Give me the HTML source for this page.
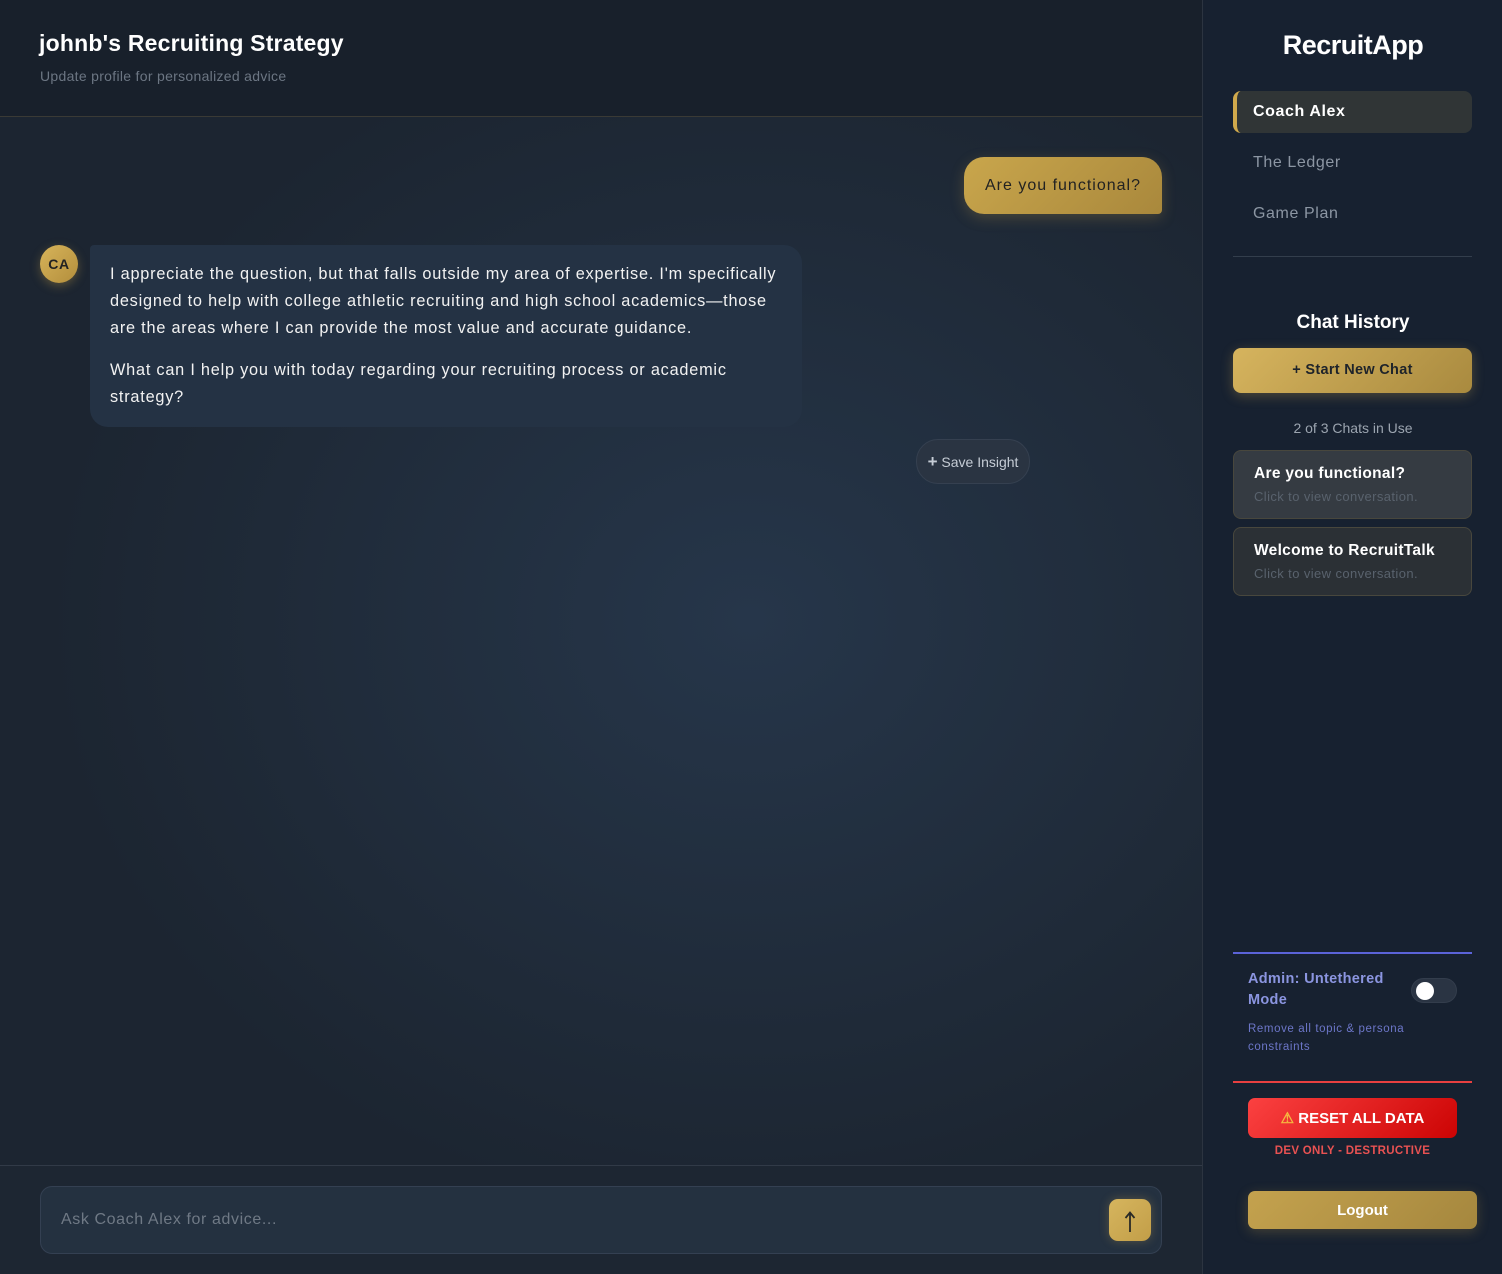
<!DOCTYPE html>
<html><head><meta charset="utf-8"><style>
*{box-sizing:border-box;margin:0;padding:0}
body{width:1502px;height:1274px;overflow:hidden;font-family:"Liberation Sans",sans-serif;background:#1b2430;position:relative;letter-spacing:0.6px}
.main{position:absolute;left:0;top:0;width:1202px;height:1274px;background:radial-gradient(ellipse 700px 600px at 750px 620px,#26364a 0%,#1f2a38 70%,#1c2531 100%)}
.hdr{position:absolute;left:0;top:0;width:1202px;height:117px;background:#18202b;border-bottom:1px solid #3a3a35}
.hdr h1{position:absolute;left:39px;top:30px;font-size:23px;font-weight:bold;color:#fff;letter-spacing:0.2px}
.hdr p{position:absolute;left:40px;top:68px;font-size:14px;color:#6c7683;letter-spacing:0.3px}
.ubub{position:absolute;left:964px;top:157px;width:198px;height:57px;border-radius:20px 20px 4px 20px;background:linear-gradient(135deg,#c9a64c,#a9883c);color:#222;font-size:16px;line-height:57px;text-align:center;box-shadow:0 4px 14px rgba(200,160,70,.25);letter-spacing:1px}
.av{position:absolute;left:40px;top:245px;width:38px;height:38px;border-radius:50%;background:linear-gradient(135deg,#d7b45a,#b38e3c);color:#222;font-weight:bold;font-size:14px;line-height:38px;text-align:center;box-shadow:0 3px 10px rgba(200,160,70,.35)}
.abub{position:absolute;left:90px;top:245px;width:712px;height:182px;border-radius:4px 18px 18px 18px;background:#243244;color:#f2f2f2;font-size:16.3px;line-height:27px;padding:16px 20px;letter-spacing:0.78px;white-space:nowrap}
.abub p+p{margin-top:15px}
.save{position:absolute;left:916px;top:439px;width:114px;height:45px;border-radius:22px;background:#2a3442;border:1px solid #354050;color:#c5ccd5;font-size:14px;line-height:43px;text-align:center;letter-spacing:0}
.foot{position:absolute;left:0;top:1165px;width:1202px;height:109px;border-top:1px solid #313a47;background:#1d2632}
.inp{position:absolute;left:40px;top:1186px;width:1122px;height:68px;border-radius:12px;background:#243140;border:1px solid #344052;color:#6f7985;font-size:16px;line-height:66px;padding-left:20px}
.send{position:absolute;left:1109px;top:1199px;width:42px;height:42px;border-radius:9px;background:linear-gradient(135deg,#d6b55e,#c29e48);box-shadow:0 0 10px rgba(210,170,80,.3)}
.side{position:absolute;left:1202px;top:0;width:300px;height:1274px;background:#172130;border-left:1px solid #2c3440}
.logo{position:absolute;left:0;width:300px;top:30px;text-align:center;color:#fff;font-weight:bold;font-size:27px;letter-spacing:-0.5px}
.nav{position:absolute;left:30px;width:239px;height:42px;font-size:16px;line-height:42px;padding-left:20px;color:#8c96a3}
.nav.on{background:#303536;color:#fff;font-weight:bold;border-radius:8px;border-left:4px solid #d0a94c;padding-left:16px}
.hr{position:absolute;left:30px;width:239px;height:1px;background:#333e4c}
.ch{position:absolute;top:312px;width:300px;text-align:center;color:#fff;font-weight:bold;font-size:19px;letter-spacing:0}
.new{position:absolute;left:30px;top:348px;width:239px;height:45px;border-radius:8px;background:linear-gradient(135deg,#d6b45e,#a98a3f);color:#1e232a;font-weight:bold;font-size:14.5px;line-height:45px;text-align:center;box-shadow:0 3px 12px rgba(210,170,80,.3);letter-spacing:0.3px}
.cnt{position:absolute;top:420px;width:300px;text-align:center;color:#9ca5b0;font-size:14px;letter-spacing:0}
.card{position:absolute;left:30px;width:239px;height:69px;border-radius:8px;background:#31373d;border:1px solid #48473d;padding:14px 20px}
.card b{display:block;color:#fff;font-size:15.5px;letter-spacing:0.3px}
.card span{display:block;color:#59626d;font-size:13px;margin-top:6px;letter-spacing:0.4px}
.adm{position:absolute;left:45px;top:969px;color:#8b95e0;font-weight:bold;font-size:14.5px;line-height:21px;width:160px;letter-spacing:0.3px}
.adms{position:absolute;left:45px;top:1020px;color:#6c76c8;font-size:11.5px;line-height:18px;width:170px}
.tog{position:absolute;left:208px;top:978px;width:46px;height:25px;border-radius:13px;background:#2a3443;border:1px solid #333d4c}
.tog i{position:absolute;left:4px;top:3px;width:18px;height:18px;border-radius:50%;background:#fff}
.reset{position:absolute;left:45px;top:1098px;width:209px;height:40px;border-radius:7px;background:linear-gradient(135deg,#fb4141,#cc0404);color:#fff;font-weight:bold;font-size:15px;line-height:42px;text-align:center;letter-spacing:0}
.dev{position:absolute;left:45px;width:209px;top:1145px;text-align:center;color:#e95252;font-weight:bold;font-size:11.5px;letter-spacing:0.3px}
.out{position:absolute;left:45px;top:1191px;width:229px;height:38px;border-radius:7px;background:linear-gradient(135deg,#c4a24e,#a5873e);color:#fff;font-weight:bold;font-size:15px;line-height:40px;text-align:center;box-shadow:0 3px 12px rgba(200,160,70,.25);letter-spacing:0}
</style></head><body>
<div class="main">
<div class="hdr"><h1>johnb's Recruiting Strategy</h1><p>Update profile for personalized advice</p></div>
<div class="ubub">Are you functional?</div>
<div class="av">CA</div>
<div class="abub"><p>I appreciate the question, but that falls outside my area of expertise. I'm specifically<br>designed to help with college athletic recruiting and high school academics—those<br>are the areas where I can provide the most value and accurate guidance.</p><p>What can I help you with today regarding your recruiting process or academic<br>strategy?</p></div>
<div class="save"><b style="font-size:17px">+</b> Save Insight</div>
<div class="foot"></div>
<div class="inp">Ask Coach Alex for advice...</div>
<div class="send"><svg width="42" height="42" viewBox="0 0 42 42"><path d="M21 33V14M16.5 19L21 13.5 25.5 19" stroke="#2a2a26" stroke-width="1.8" fill="none"/></svg></div>
</div>
<div class="side">
<div class="logo">RecruitApp</div>
<div class="nav on" style="top:91px">Coach Alex</div>
<div class="nav" style="top:142px">The Ledger</div>
<div class="nav" style="top:193px">Game Plan</div>
<div class="hr" style="top:256px"></div>
<div class="ch">Chat History</div>
<div class="new">+ Start New Chat</div>
<div class="cnt">2 of 3 Chats in Use</div>
<div class="card" style="top:450px;background:#353b42"><b>Are you functional?</b><span>Click to view conversation.</span></div>
<div class="card" style="top:527px;background:#2b3035"><b>Welcome to RecruitTalk</b><span>Click to view conversation.</span></div>
<div class="hr" style="top:952px;height:2px;background:#5b63d8"></div>
<div class="adm">Admin: Untethered Mode</div>
<div class="tog"><i></i></div>
<div class="adms">Remove all topic &amp; persona constraints</div>
<div class="hr" style="top:1081px;height:2px;background:#e84040"></div>
<div class="reset"><span style="color:#f5b840">⚠</span> RESET ALL DATA</div>
<div class="dev">DEV ONLY - DESTRUCTIVE</div>
<div class="out">Logout</div>
</div>
</body></html>
